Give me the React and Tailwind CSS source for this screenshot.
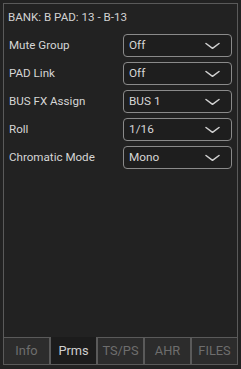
import React from 'react';

const rows = [
  { label: 'Mute Group', value: 'Off' },
  { label: 'PAD Link', value: 'Off' },
  { label: 'BUS FX Assign', value: 'BUS 1' },
  { label: 'Roll', value: '1/16' },
  { label: 'Chromatic Mode', value: 'Mono' },
];

const tabs = ['Info', 'Prms', 'TS/PS', 'AHR', 'FILES'];

const Chevron = () => (
  <svg width="15" height="8" viewBox="0 0 15 8" fill="none">
    <path d="M1 1.5L7.5 6.3L14 1.5" stroke="#d0d0d0" strokeWidth="1.5" strokeLinecap="round" strokeLinejoin="round" />
  </svg>
);

const SelectBox = ({ value }) => (
  <div className="w-[109px] h-[23px] border border-[#8a8a8a] rounded-[4px] bg-[#1e1e1e] flex items-center justify-between pl-[5px] pr-[11px]">
    <span className="text-[11.8px] text-[#d6d6d6]">{value}</span>
    <Chevron />
  </div>
);

export default function App() {
  return (
    <div className="w-[241px] h-[369px] bg-[#222222] pt-[3px] px-[3px] pb-[4px] flex flex-col font-['Roboto',sans-serif]">
      {/* Panel */}
      <div className="flex-1 border border-b-0 border-[#5a5a5a] flex flex-col">
        <div className="px-[4px] pt-[5px] text-[11.6px] leading-[16px] text-[#d2d2d2]">
          BANK: B PAD: 13 - B-13
        </div>
        <div className="mt-[9px] flex flex-col gap-[5px] pl-[5px] pr-[5px]">
          {rows.map((r) => (
            <div key={r.label} className="h-[23px] flex items-center justify-between">
              <span className="text-[11.6px] text-[#d6d6d6]">{r.label}</span>
              <SelectBox value={r.value} />
            </div>
          ))}
        </div>
      </div>

      {/* Tabs */}
      <div className="flex h-[28px]">
        {tabs.map((t) => {
          const active = t === 'Prms';
          return (
            <div
              key={t}
              className={
                active
                  ? 'flex-1 flex items-center justify-center border border-t-0 border-[#5a5a5a] bg-[#1c1c1c] text-[12.8px] text-[#cfcfcf]'
                  : 'flex-1 flex items-center justify-center border border-[#5a5a5a] bg-[#2c2c2c] text-[12.8px] text-[#6e6e6e]'
              }
            >
              {t}
            </div>
          );
        })}
      </div>
    </div>
  );
}
